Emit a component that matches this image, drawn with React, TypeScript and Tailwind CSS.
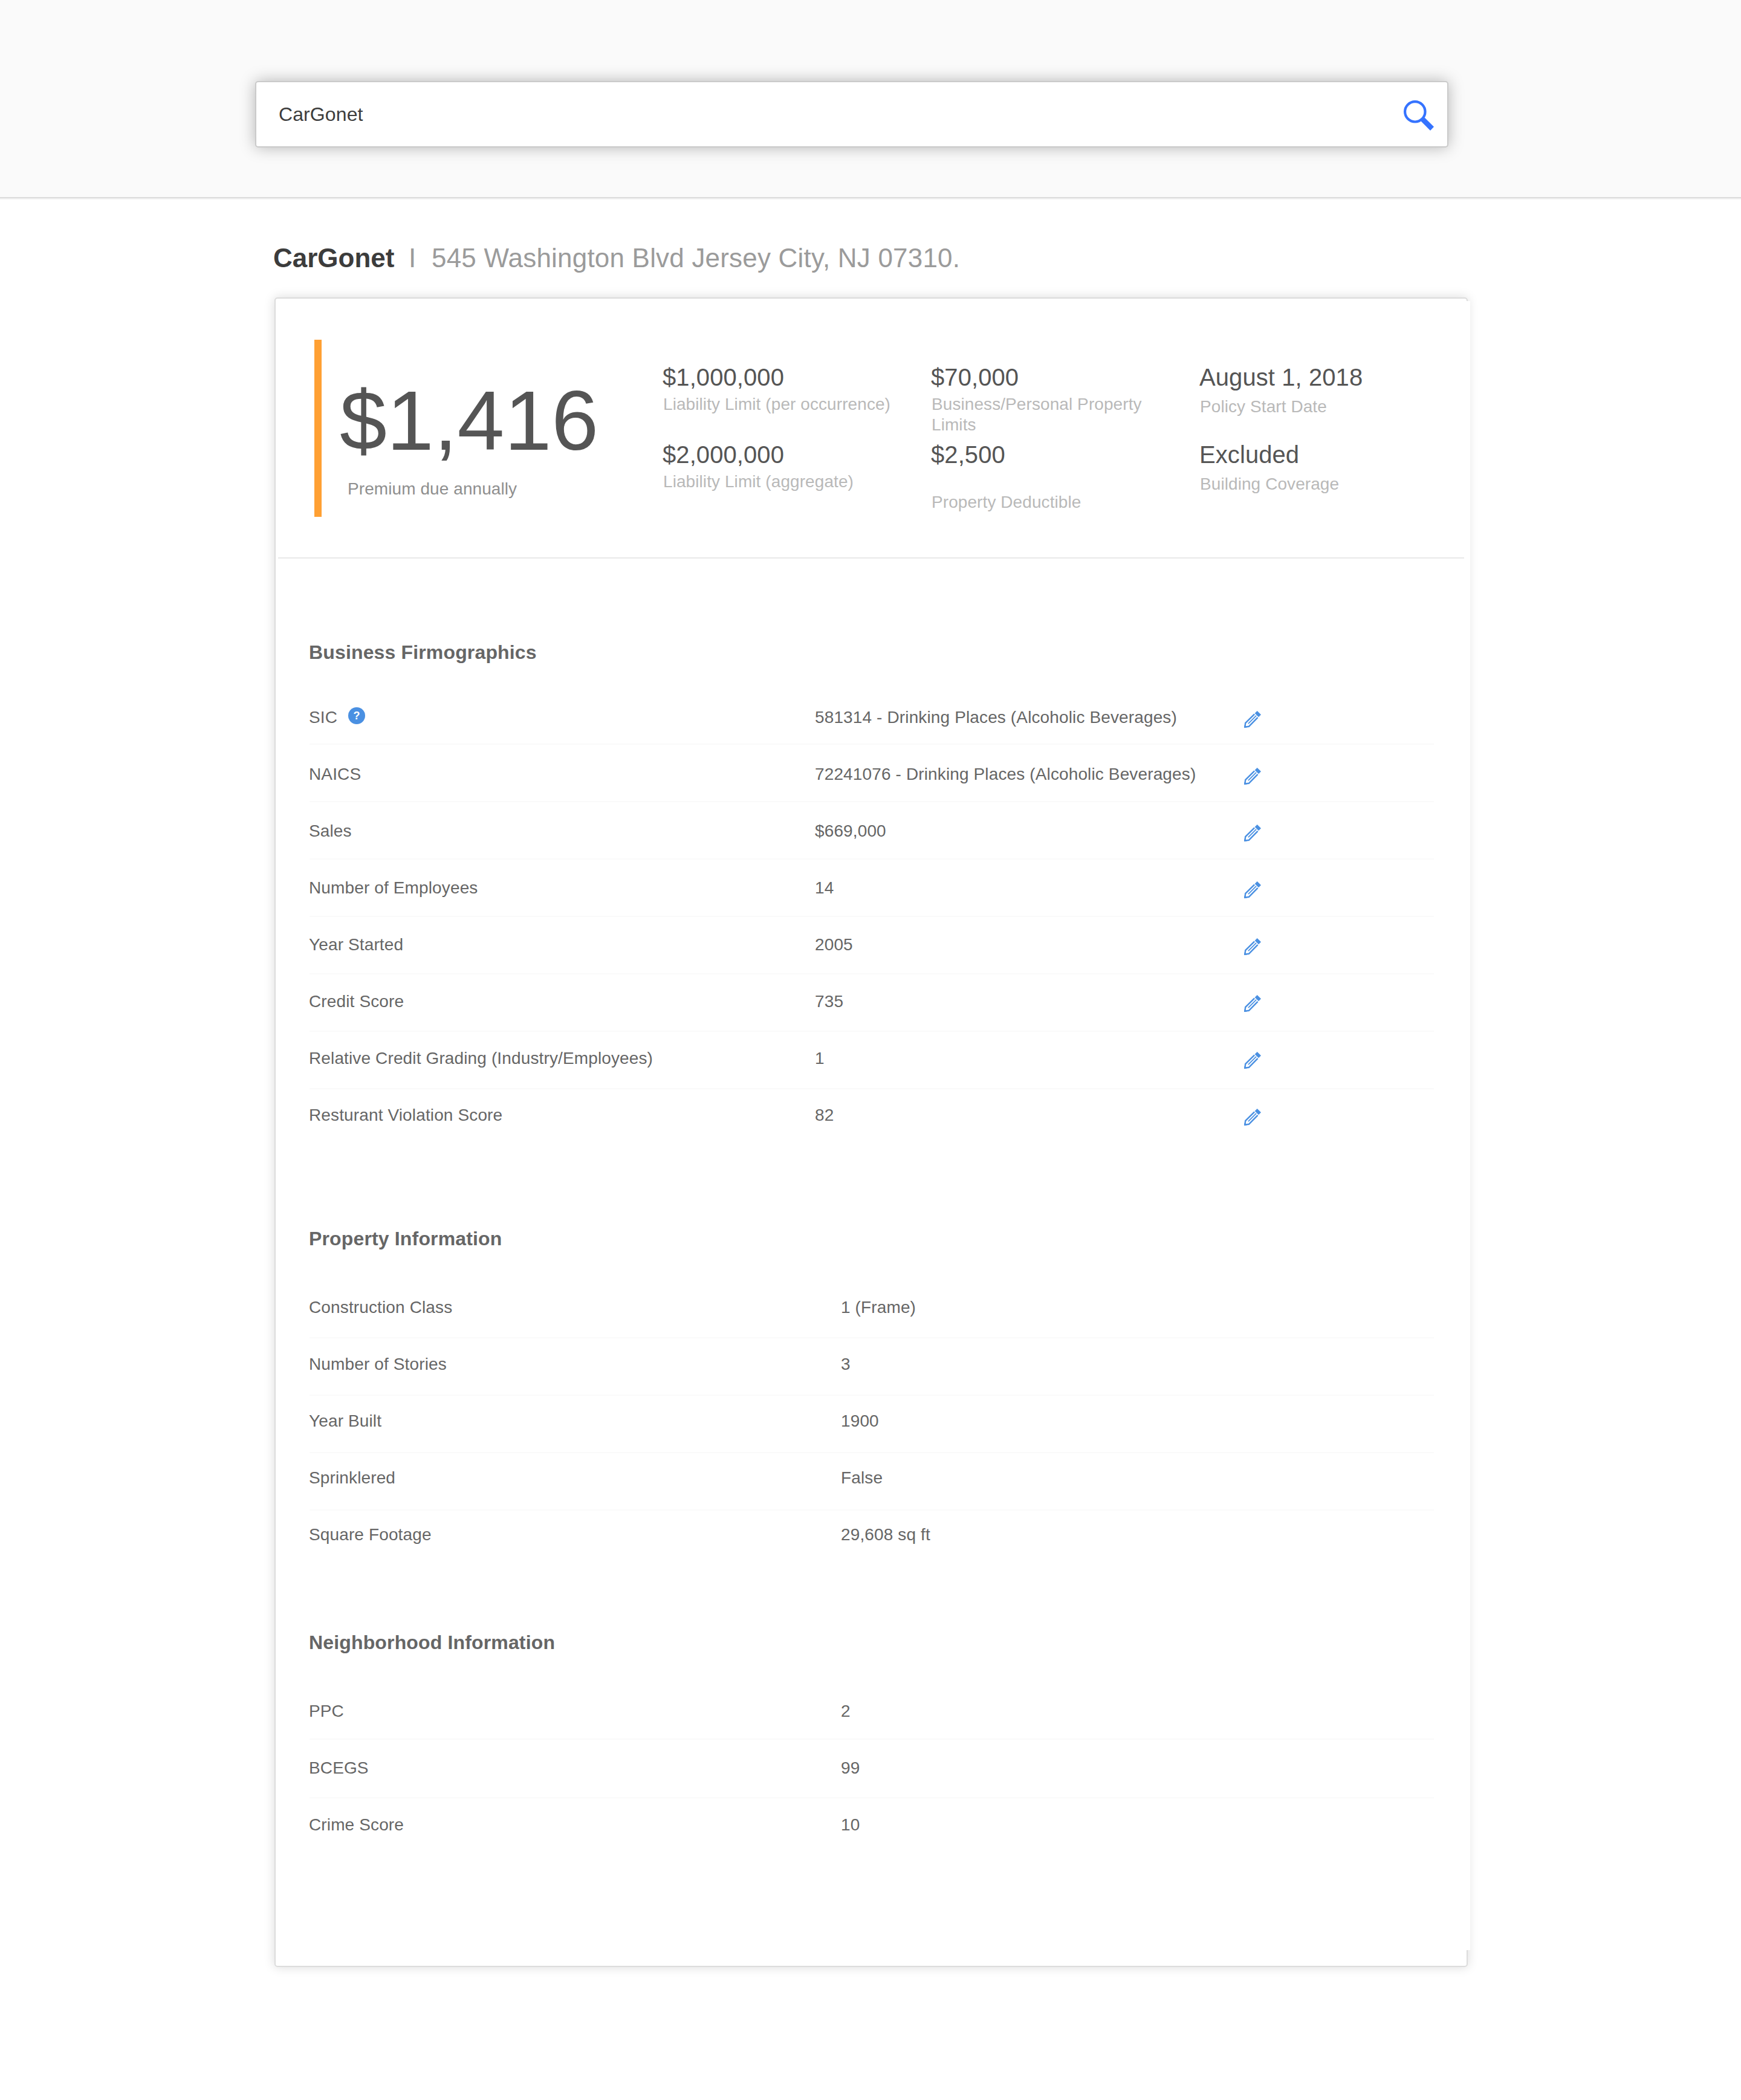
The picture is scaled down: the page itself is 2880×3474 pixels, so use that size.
type Stat = { value: string; label: string; labelClass: string };
type Row = { label: string; value: string; help?: boolean };

const stats: Stat[] = [
  { value: "$1,000,000", label: "Liability Limit (per occurrence)", labelClass: "mt-1.5" },
  { value: "$70,000", label: "Business/Personal Property Limits", labelClass: "mt-1.5" },
  { value: "August 1, 2018", label: "Policy Start Date", labelClass: "mt-2.5" },
  { value: "$2,000,000", label: "Liability Limit (aggregate)", labelClass: "mt-1.5" },
  { value: "$2,500", label: "Property Deductible", labelClass: "mt-10" },
  { value: "Excluded", label: "Building Coverage", labelClass: "mt-2.5" },
];

const firmographics: Row[] = [
  { label: "SIC", value: "581314 - Drinking Places (Alcoholic Beverages)", help: true },
  { label: "NAICS", value: "72241076 - Drinking Places (Alcoholic Beverages)" },
  { label: "Sales", value: "$669,000" },
  { label: "Number of Employees", value: "14" },
  { label: "Year Started", value: "2005" },
  { label: "Credit Score", value: "735" },
  { label: "Relative Credit Grading (Industry/Employees)", value: "1" },
  { label: "Resturant Violation Score", value: "82" },
];

const property: Row[] = [
  { label: "Construction Class", value: "1 (Frame)" },
  { label: "Number of Stories", value: "3" },
  { label: "Year Built", value: "1900" },
  { label: "Sprinklered", value: "False" },
  { label: "Square Footage", value: "29,608 sq ft" },
];

const neighborhood: Row[] = [
  { label: "PPC", value: "2" },
  { label: "BCEGS", value: "99" },
  { label: "Crime Score", value: "10" },
];

function SearchIcon() {
  return (
    <svg width="50" height="50" viewBox="0 0 50 50" className="mt-1 shrink-0">
      <path d="M34.6 28.4 50 43.8 44 50 28.6 34.4Z" fill="#3573ff" />
      <circle cx="18.8" cy="18.8" r="16.7" fill="white" stroke="#3573ff" strokeWidth="4.2" />
    </svg>
  );
}

function PencilIcon() {
  return (
    <svg width="28" height="28" viewBox="0 0 28 28" fill="none" stroke="#4a90e2" className="mt-[5px] shrink-0">
      <path d="M17.2 5.4 2.2 20.1 1.4 26.6 7.9 25.8 22.6 10.8" strokeWidth="2.4" />
      <path d="M6.9 21.1 20.1 7.9" strokeWidth="1.7" />
      <path d="M21.7 0 28 6.3 24 10.3 17.7 4Z" fill="#4a90e2" stroke="none" />
      <path d="M0 28 .6 23.4 4.6 27.4Z" fill="#4a90e2" stroke="none" />
    </svg>
  );
}

function HelpBadge() {
  return (
    <span className="-mt-px flex h-7 w-7 items-center justify-center rounded-full bg-[#4a90e2] text-[18px] leading-7 font-bold tracking-normal text-white">
      ?
    </span>
  );
}

type SectionProps = {
  title: string;
  rows: Row[];
  /** Top padding of the first row, and how much it shrinks with every row. */
  pad: number;
  step: number;
  rowClass: string;
  labelClass: string;
  className: string;
  listClass: string;
  editable?: boolean;
};

function Section({ title, rows, pad, step, rowClass, labelClass, className, listClass, editable }: SectionProps) {
  return (
    <section className={className}>
      <h2 className="-ml-px text-[32px] leading-9 font-bold tracking-[0.15px]">{title}</h2>
      <div className={listClass}>
        {rows.map((row, i) => (
          <div
            key={row.label}
            className={`${rowClass} flex items-start text-[28px] leading-[31px] tracking-[0.13px] ${
              i < rows.length - 1 ? "border-b-2 border-[#fafafa]" : ""
            }`}
            style={{ paddingTop: pad - i * step }}
          >
            <div className={`${labelClass} -ml-px flex shrink-0`}>
              <span className={row.help ? "w-[65px]" : ""}>{row.label}</span>
              {row.help && <HelpBadge />}
            </div>
            <div className="w-[710px] shrink-0">{row.value}</div>
            {editable && <PencilIcon />}
          </div>
        ))}
      </div>
    </section>
  );
}

export default function App() {
  return (
    <div className="h-[3474px] w-[2880px] bg-white font-['Liberation_Sans',Arial,sans-serif]">
      <header className="h-[330px] border-b-2 border-[#f2f2f2]">
        <div className="h-[328px] border-b-2 border-[#dcdcdc] bg-[#fafafa] pt-[134px] pl-[422px]">
          <div className="flex h-[110px] w-[1974px] items-center justify-between rounded-[5px] border-2 border-[#cacaca] bg-white pr-[22px] pl-[37px] shadow-[0_0_26px_rgba(0,0,0,0.28)]">
            <span className="text-[32px] leading-9 tracking-[0.1px] text-[#3d3d3d]">CarGonet</span>
            <SearchIcon />
          </div>
        </div>
      </header>

      <main className="pl-[454px]">
        <div className="mt-[72px] -ml-0.5 flex text-[44px] leading-[49px] text-[#9b9b9b]">
          <h1 className="w-[224px] font-bold text-[#3c3c3c]">CarGonet</h1>
          <span className="w-[38px]">I</span>
          <span className="tracking-[0.2px]">545 Washington Blvd Jersey City, NJ 07310.</span>
        </div>

        <div className="mt-[41px] h-[2762px] w-[1974px] rounded-[5px] border-2 border-[#dcdcdc] bg-white pt-1 shadow-[0_0_18px_rgba(0,0,0,0.15)]">
          <div className="-mr-1.5 h-[2728px] bg-white text-[#666666]">
            <div className="mr-2.5 ml-1 flex h-[426px] items-start border-b-2 border-[#e9e9e9] pl-[60px]">
              <div className="mt-16 h-[293px] w-3 shrink-0 bg-[#ffa033]" />
              <div className="mt-[119px] ml-[30px] w-[534px] shrink-0">
                <div className="text-[140px] leading-[157px] text-[#555555]">$1,416</div>
                <div className="mt-[19px] ml-[13px] text-[28px] leading-[31px] tracking-[0.08px] text-[#8f8f8f]">
                  Premium due annually
                </div>
              </div>
              <div className="mt-[104px] grid shrink-0 auto-rows-[128px] grid-cols-[444px_444px_420px]">
                {stats.map((s) => (
                  <div key={s.label}>
                    <div className="text-[40px] leading-[44px] tracking-[0.08px] text-[#555555]">{s.value}</div>
                    <div
                      className={`${s.labelClass} ml-px w-[390px] text-[28px] leading-[34px] tracking-[0.08px] text-[#b9b9b9]`}
                    >
                      {s.label}
                    </div>
                  </div>
                ))}
              </div>
            </div>

            <div className="ml-14 w-[1860px]">
              <Section
                title="Business Firmographics"
                rows={firmographics}
                pad={34}
                step={1}
                rowClass="h-[95px]"
                labelClass="w-[837px]"
                className="pt-[137px]"
                listClass="mt-10"
                editable
              />
              <Section
                title="Property Information"
                rows={property}
                pad={28}
                step={1}
                rowClass="h-[95px]"
                labelClass="w-[880px]"
                className="pt-[134px]"
                listClass="mt-[52px]"
              />
              <Section
                title="Neighborhood Information"
                rows={neighborhood}
                pad={34}
                step={3}
                rowClass="h-[97px]"
                labelClass="w-[880px]"
                className="pt-[105px]"
                listClass="mt-[46px]"
              />
            </div>
          </div>
        </div>
      </main>
    </div>
  );
}
